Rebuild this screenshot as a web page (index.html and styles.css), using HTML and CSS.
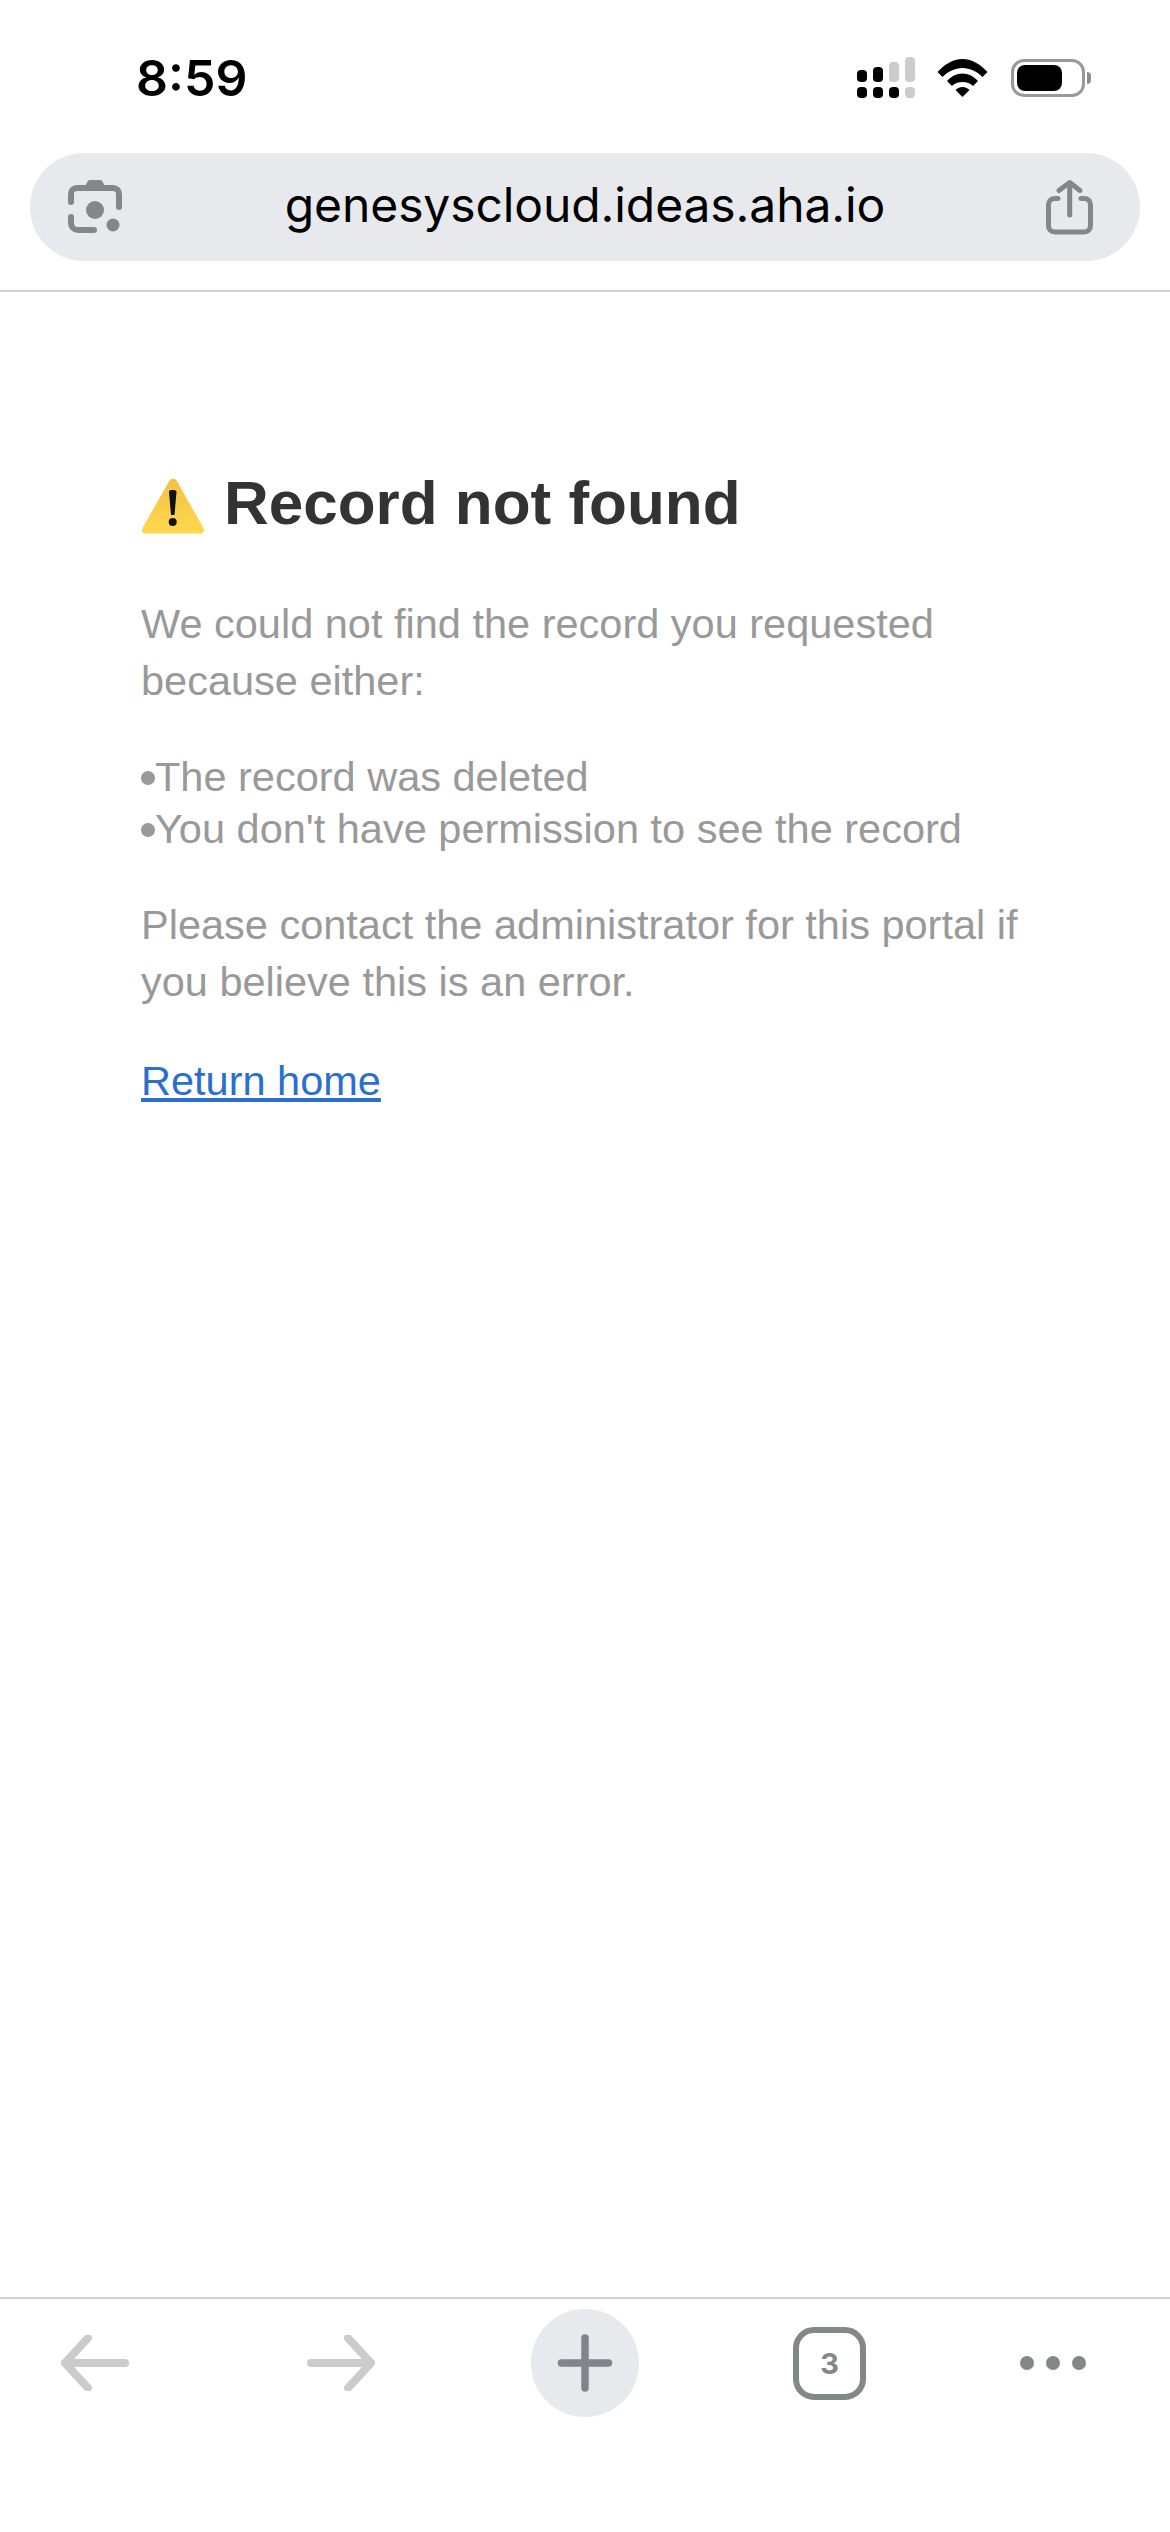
FILE: index.html
```html
<!DOCTYPE html>
<html lang="en">
<head>
<meta charset="utf-8">
<title>Record not found</title>
<link rel="stylesheet" href="styles.css">
</head>
<body>
<div class="app">
  <header class="chrome">
    <div class="status">
      <span class="time">8:59</span>
      <div class="status-icons">
        <svg class="signal" width="58" height="42" viewBox="0 0 58 42">
          <rect x="0" y="13" width="10" height="12" rx="4"/>
          <rect x="16" y="10" width="10" height="15" rx="4"/>
          <rect x="32" y="5" width="10" height="20" rx="4" fill="#ccc"/>
          <rect x="48" y="0" width="10" height="25" rx="4" fill="#ccc"/>
          <rect x="0" y="30" width="10" height="11" rx="4"/>
          <rect x="16" y="30" width="10" height="11" rx="4"/>
          <rect x="32" y="30" width="10" height="11" rx="4"/>
          <rect x="48" y="30" width="10" height="11" rx="4" fill="#ccc"/>
        </svg>
        <svg class="wifi" width="51" height="38" viewBox="0 0 51 38">
          <path d="M0.5 13C7 6 15.5 0 25.5 0S44 6 50.500 13L45.500 18C40 12.500 33 9 25.500 9S11 12.500 5.500 18Z"/>
          <path d="M10 22C14 17.500 19.500 14.500 25.500 14.500S37 17.500 41 22L36 27C33.500 24.500 29.500 23 25.500 23S17.500 24.500 15 27Z"/>
          <path d="M18.500 31C20.500 29 23 28 25.500 28S30.500 29 32.500 31L25.500 38Z"/>
        </svg>
        <div class="battery">
          <div class="battery-body"><div class="battery-fill"></div></div>
          <div class="battery-cap"></div>
        </div>
      </div>
    </div>
    <div class="urlbar">
      <svg class="lens" width="54" height="54" viewBox="0 0 54 54">
        <path class="lens-line" d="M3 22V14C3 10.500 5.500 8 9 8H45C48.500 8 51 10.500 51 14V27M3 37V43C3 47 6 50 10 50H26" fill="none"/>
        <path class="lens-top" d="M16 9L19 2.500C19.500 1 20.500 0 22 0H32C33.500 0 34.500 1 35 2.500L38 9Z"/>
        <circle class="lens-top" cx="27" cy="30" r="9"/>
        <circle class="lens-top" cx="45" cy="45" r="6.500"/>
      </svg>
      <span class="url">genesyscloud.ideas.aha.io</span>
      <svg class="share" width="48" height="56" viewBox="0 0 48 56">
        <path d="M13 19.500H10C6 19.500 3.500 22 3.500 26V46.500C3.500 50.500 6 53 10 53H39C43 53 45.500 50.500 45.500 46.500V26C45.500 22 43 19.500 39 19.500H36M24.700 36V3.500M14 11.500L24.700 3.500L35 11.500" fill="none"/>
      </svg>
    </div>
  </header>

  <main class="content">
    <h1 class="title">
      <svg class="warn" width="64" height="56" viewBox="0 0 64 56">
        <defs>
          <linearGradient id="warnFill" x1="0" y1="0" x2="0" y2="1">
            <stop offset="0" stop-color="#f4c042"/>
            <stop offset="1" stop-color="#fdd850"/>
          </linearGradient>
        </defs>
        <path d="M28.500 2.500C30 0 34 0 35.500 2.500L62.500 50C64 53 62.500 55.500 59.500 55.500H4.500C1.500 55.500 0 53 1.500 50Z" fill="url(#warnFill)"/>
        <path d="M28 14C28 12.500 29 12 31.500 12S35.500 12.500 35.500 14L33.500 37H30Z" fill="#111"/>
        <circle cx="31.700" cy="44" r="4" fill="#111"/>
      </svg>
      <span>Record not found</span>
    </h1>
    <p class="para">We could not find the record you requested because either:</p>
    <ul class="reasons">
      <li>The record was deleted</li>
      <li>You don't have permission to see the record</li>
    </ul>
    <p class="para">Please contact the administrator for this portal if you believe this is an error.</p>
    <a class="home" href="#">Return home</a>
  </main>

  <footer class="toolbar">
    <svg class="tool" width="68" height="56" viewBox="0 0 68 56">
      <path class="arrow" d="M64 28H4M27 3L4 28L27 53" fill="none"/>
    </svg>
    <svg class="tool tool-forward" width="68" height="56" viewBox="0 0 68 56">
      <path class="arrow" d="M4 28H64M41 3L64 28L41 53" fill="none"/>
    </svg>
    <div class="plus-btn">
      <svg width="56" height="58" viewBox="0 0 56 58">
        <path class="plus" d="M28 4V54M4.500 29H51.500" fill="none"/>
      </svg>
    </div>
    <div class="tabs">3</div>
    <div class="dots"><i></i><i></i><i></i></div>
  </footer>
</div>
</body>
</html>
```

FILE: styles.css
```css
* { box-sizing: border-box; }
html, body { margin: 0; padding: 0; background: #fff; }
.app {
  width: 1170px;
  height: 2532px;
  display: flex;
  flex-direction: column;
  overflow: hidden;
  font-family: "Liberation Sans", Arial, sans-serif;
}
.chrome {
  height: 292px;
  padding: 0 30px;
  border-bottom: 2px solid #d0d0d0;
}
.status {
  height: 153px;
  padding: 48px 49px 0 106px;
  display: flex;
  justify-content: space-between;
  align-items: flex-start;
}
.time {
  height: 60px;
  line-height: 60px;
  font-family: Inter, sans-serif;
  font-weight: 600;
  font-size: 50px;
  color: #000;
}
.status-icons {
  height: 60px;
  display: flex;
  align-items: center;
}
.signal { margin-right: 22px; }
.wifi { margin-right: 23px; }
.battery { display: flex; align-items: center; }
.battery-body {
  width: 74px;
  height: 38px;
  border: 3px solid #999;
  border-radius: 13px;
  padding: 3px;
}
.battery-fill {
  width: 45px;
  height: 100%;
  background: #000;
  border-radius: 8px;
}
.battery-cap {
  width: 4px;
  height: 12px;
  margin-left: 2px;
  background: #8e8e8e;
  border-radius: 0 5px 5px 0;
}
.urlbar {
  height: 108px;
  border-radius: 54px;
  background: #e8e9ed;
  padding: 0 47px 0 38px;
  display: flex;
  align-items: center;
  justify-content: space-between;
}
.url {
  padding: 0 0 5px 3px;
  font-family: Inter, sans-serif;
  font-size: 48px;
  letter-spacing: -0.1px;
  color: #000;
}
.lens-line { stroke: #828889; stroke-width: 6; stroke-linecap: round; }
.lens-top { fill: #828889; }
.share path { stroke: #828889; stroke-width: 5; stroke-linecap: round; stroke-linejoin: round; }

.content {
  flex: 1;
  padding: 176px 141px 0;
}
.title {
  margin: 0 0 57px;
  display: flex;
  align-items: center;
  gap: 19px;
  font-size: 62px;
  line-height: 70px;
  font-weight: 700;
  color: #333;
}
.warn { margin-top: 6px; }
.para {
  margin: 0 0 42px;
  font-size: 41.5px;
  line-height: 57px;
  color: #999;
}
.reasons {
  margin: 0 0 41px;
  padding: 0;
  list-style: none;
  font-size: 41.5px;
  line-height: 52px;
  color: #999;
}
.reasons li::before {
  content: "";
  display: inline-block;
  width: 14px;
  height: 14px;
  vertical-align: 6px;
  border-radius: 50%;
  background: #999;
}
.home {
  font-size: 41.5px;
  line-height: 57px;
  color: #2a6fd0;
  text-decoration: underline;
}

.toolbar {
  height: 235px;
  border-top: 2px solid #d0d0d0;
  padding: 10px 0 0 61px;
  display: flex;
  align-items: flex-start;
}
.tool { margin-top: 26px; }
.tool-forward { margin-left: 178px; }
.arrow { stroke: #cbcbcb; stroke-width: 8; stroke-linecap: round; stroke-linejoin: round; }
.plus-btn {
  width: 108px;
  height: 108px;
  margin-left: 156px;
  border-radius: 50%;
  background: #e8e9ed;
  display: flex;
  align-items: center;
  justify-content: center;
}
.plus { stroke: #80848b; stroke-width: 7.5; stroke-linecap: round; }
.tabs {
  width: 73px;
  height: 73px;
  margin: 18px 0 0 154px;
  border: 6px solid #828889;
  border-radius: 21px;
  display: flex;
  align-items: center;
  justify-content: center;
  font-family: Inter, sans-serif;
  font-weight: 700;
  font-size: 29px;
  color: #828889;
}
.dots {
  margin: 47px 0 0 154px;
  display: flex;
  gap: 12px;
}
.dots i {
  display: block;
  width: 14px;
  height: 14px;
  border-radius: 50%;
  background: #828889;
}
```
